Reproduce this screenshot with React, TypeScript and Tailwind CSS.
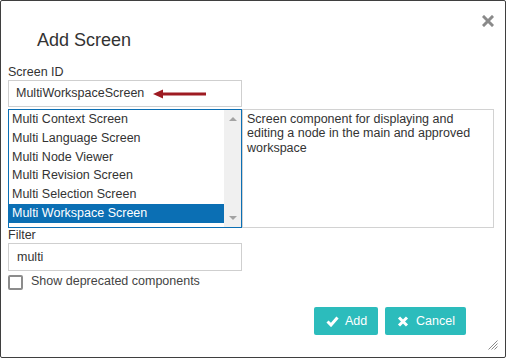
import React from 'react';

const items = [
  'Multi Context Screen',
  'Multi Language Screen',
  'Multi Node Viewer',
  'Multi Revision Screen',
  'Multi Selection Screen',
  'Multi Workspace Screen',
];

function CloseIcon() {
  return (
    <svg width="12" height="12" viewBox="0 0 12 12">
      <path d="M2 2 L10 10 M10 2 L2 10" stroke="#8a8a8a" strokeWidth="3" strokeLinecap="square" />
    </svg>
  );
}

function CheckIcon() {
  return (
    <svg width="13" height="11" viewBox="0 0 13 11">
      <path d="M1.5 5.5 L5 9 L11.5 1.5" stroke="#fff" strokeWidth="3" fill="none" strokeLinejoin="miter" />
    </svg>
  );
}

function CrossIcon() {
  return (
    <svg width="12" height="11" viewBox="0 0 12 11">
      <path d="M2 1.5 L10 9.5 M10 1.5 L2 9.5" stroke="#fff" strokeWidth="3" />
    </svg>
  );
}

export default function App() {
  return (
    <div className="w-[507px] h-[359px] bg-white" style={{ fontFamily: '"Liberation Sans", Arial, sans-serif' }}>
      <div className="relative w-[506px] h-[358px] border border-[#3f3f3f] rounded-[2px] bg-white text-[#333] text-[12.5px] leading-[15px]">
        {/* header */}
        <div className="flex justify-end h-[28px] pt-[14px] pr-[11px]">
          <CloseIcon />
        </div>
        <h1 className="ml-[36px] mt-[1px] text-[18px] leading-[20px] font-normal text-[#333]">Add Screen</h1>

        <div className="pl-[7px] mt-[15px]">
          <div>Screen ID</div>
          <div className="w-[234px] h-[27px] border border-[#cfcfcf] flex items-center pl-[7px] gap-[9px]">
            <span>MultiWorkspaceScreen</span>
            <svg width="54" height="12" viewBox="0 0 54 12">
              <path d="M8 6 L53 6" stroke="#9e1b22" strokeWidth="3" />
              <path d="M0 6 L10 1.5 L10 10.5 Z" fill="#9e1b22" />
            </svg>
          </div>

          <div className="flex items-start mt-[2px]">
            <div className="w-[234px] h-[119px] border border-[#0b6fb4] flex">
              <div className="flex-1 flex flex-col">
                {items.map((it, i) => (
                  <div
                    key={it}
                    className={
                      i === items.length - 1
                        ? 'h-[18.8px] leading-[18.8px] pl-[3px] bg-[#0b6fb4] text-white'
                        : 'h-[18.8px] leading-[18.8px] pl-[3px] text-[#333]'
                    }
                  >
                    {it}
                  </div>
                ))}
              </div>
              <div className="w-[17px] bg-[#f0f0f0] flex flex-col justify-between items-center py-[7px]">
                <div className="w-0 h-0 border-l-[4px] border-r-[4px] border-b-[4px] border-l-transparent border-r-transparent border-b-[#a3a3a3]" />
                <div className="w-0 h-0 border-l-[4px] border-r-[4px] border-t-[4px] border-l-transparent border-r-transparent border-t-[#a3a3a3]" />
              </div>
            </div>
            <div className="w-[252px] h-[119px] border border-[#d2d2d2] pl-[4px] pr-[4px] pt-[2px] leading-[14.3px] text-[#333]">
              Screen component for displaying and editing a node in the main and approved workspace
            </div>
          </div>

          <div>Filter</div>
          <div className="w-[234px] h-[28px] border border-[#cfcfcf] flex items-center pl-[8px]">multi</div>

          <label className="flex items-start h-[15px] mt-[4px] gap-[8px] text-[#444]">
            <span className="w-[15px] h-[15px] border-2 border-[#8c8c8c] rounded-[2px] bg-white" />
            <span className="-mt-[1px]">Show deprecated components</span>
          </label>
        </div>

        <div className="flex justify-end gap-[7px] mt-[17px] pr-[39px]">
          <button className="w-[64px] h-[28px] rounded-[2px] bg-[#2cbcbc] text-white flex items-center pl-[12px] gap-[6px]">
            <CheckIcon />
            <span>Add</span>
          </button>
          <button className="w-[81px] h-[28px] rounded-[2px] bg-[#2cbcbc] text-white flex items-center pl-[12px] gap-[7px]">
            <CrossIcon />
            <span>Cancel</span>
          </button>
        </div>

        <svg className="absolute right-[7px] bottom-[7px]" width="10" height="10" viewBox="0 0 10 10">
          <path d="M9.5 0.5 L0.5 9.5 M9.5 3.5 L3.5 9.5 M9.5 6.5 L6.5 9.5" stroke="#8a8a8a" strokeWidth="1" />
        </svg>
      </div>
    </div>
  );
}
